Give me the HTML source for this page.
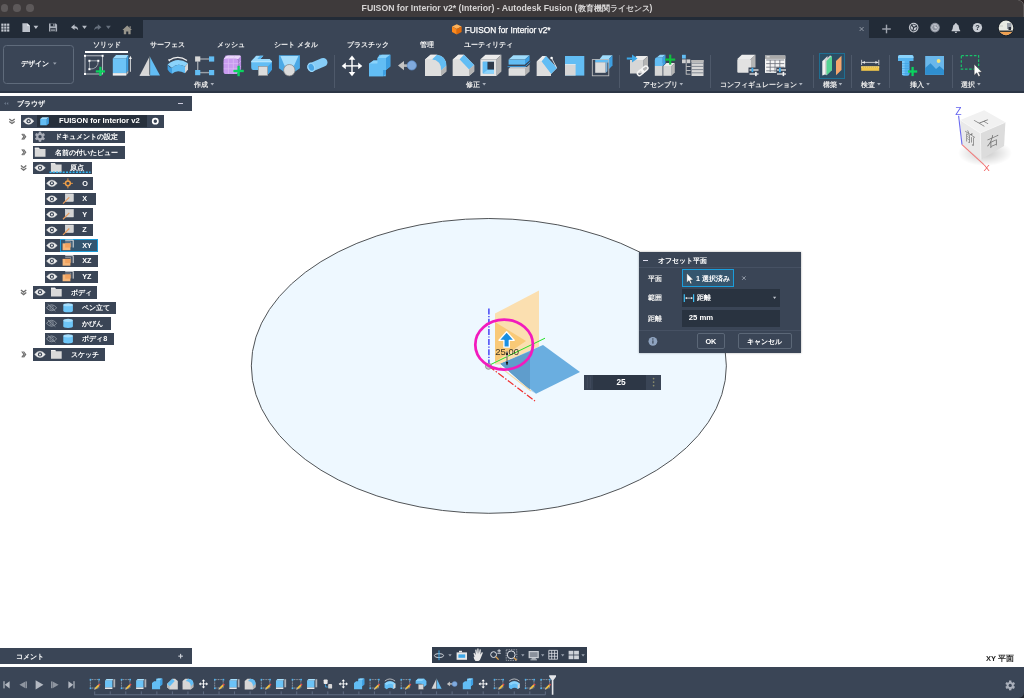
<!DOCTYPE html>
<html lang="ja"><head><meta charset="utf-8"><title>Autodesk Fusion</title>
<style>
html,body{margin:0;padding:0}
body{width:1024px;height:698px;position:relative;overflow:hidden;background:#fff;font-family:"Liberation Sans",sans-serif;color:#fff}
.a{position:absolute}
.t{position:absolute;white-space:nowrap;font-weight:bold;line-height:1;}
.jp{letter-spacing:0}
#title{left:0;top:0;width:1024px;height:17px;background:#3e3a3b}
#tabbar{left:0;top:17px;width:1024px;height:21px;background:#222b37}
#tab{left:143.2px;top:20px;width:725.8px;height:18px;background:#3a4556}
#toolbar{left:0;top:38px;width:1024px;height:54.5px;background:#3a4556;border-bottom:2px solid #2c3645;box-sizing:border-box}
.lbl{font-size:7.1px;color:#f2f2f2;top:41.9px}
.grp{font-size:7.25px;color:#e8e8e8;top:80.9px}
.sep{position:absolute;top:55px;height:33px;width:1px;background:#4e596a}
.row{position:absolute;height:12.5px;background:#3a4556}
.row .t{font-size:7.25px;top:2.5px;color:#fff}
#ui{position:absolute;left:0;top:0;width:1024px;height:698px;will-change:transform}
#icons{left:0;top:0;width:1024px;height:698px;pointer-events:none}
</style></head>
<body>
<div id="ui">
<svg class="a" style="left:0;top:0" width="1024" height="698" viewBox="0 0 1024 698"><ellipse cx="488.85" cy="365.9" rx="237.5" ry="147.4" fill="#eef8ff" stroke="#505356" stroke-width="1"/><polygon points="495.00,313.40 539.00,290.60 539.00,346.60 501.00,364.40 495.00,364.40" fill="#fbdfb0" /><polygon points="495.00,322.00 526.00,341.00 495.00,362.00" fill="#f9c977" /><polygon points="543.00,345.00 580.00,372.00 536.00,393.70 500.50,363.70" fill="#6aaee0" /><polygon points="500.50,363.70 529.80,352.00 529.80,389.50 536.00,393.70 529.80,390.00" fill="#5e9ccb" /><polygon points="500.50,363.70 529.80,352.00 529.80,389.30" fill="#5f9dcc" /><line x1="500.00" y1="367.00" x2="531.00" y2="391.00" stroke="#f5d9a8" stroke-width="1.20" /><line x1="488.90" y1="308.50" x2="488.90" y2="365.00" stroke="#3a3af5" stroke-width="1.40" stroke-dasharray="6 1.5 1.2 1.5"/><line x1="488.70" y1="366.00" x2="535.00" y2="401.00" stroke="#f03030" stroke-width="1.25" stroke-dasharray="7 1.8 1.4 1.8"/><line x1="488.70" y1="365.50" x2="545.00" y2="338.20" stroke="#25e025" stroke-width="1.00" /><circle cx="488.50" cy="366.30" r="3.00" fill="#c8c8c8" stroke="#8a8a8a" stroke-width="0.9"/><line x1="507.00" y1="351.50" x2="507.00" y2="357.00" stroke="#f6ecd6" stroke-width="1.80" /><line x1="507.00" y1="353.00" x2="507.00" y2="365.00" stroke="#222" stroke-width="0.70" /><polygon points="507.00,350.80 505.80,355.00 508.20,355.00" fill="#111" /><polygon points="507.00,365.60 505.80,362.00 508.20,362.00" fill="#111" /><path d="M506.6 331.7 L514.2 340.3 L509.3 340.3 L509.3 347.2 L503.9 347.2 L503.9 340.3 L499 340.3 Z" fill="#1a8fe3" stroke="#fff" stroke-width="1.3" stroke-linejoin="round"/><text x="495.3" y="354.9" font-family="Liberation Sans, sans-serif" font-size="9.45" fill="#3b3424">25.00</text><ellipse cx="504.1" cy="344.65" rx="28.8" ry="25" fill="none" stroke="#f21bbd" stroke-width="2.75"/></svg>
<div class="a" id="title"></div>
<div class="a" style="left:0.5px;top:4.4px;width:7.6px;height:7.6px;border-radius:50%;background:#5d595a"></div>
<div class="a" style="left:13.2px;top:4.4px;width:7.6px;height:7.6px;border-radius:50%;background:#5d595a"></div>
<div class="a" style="left:26.2px;top:4.4px;width:7.6px;height:7.6px;border-radius:50%;background:#5d595a"></div>
<div class="t" style="left:361.6px;top:4.2px;font-size:8.7px;color:#d6d4d4">FUISON for Interior v2* (Interior) - Autodesk Fusion (<span style="font-size:8.15px">教育機関ライセンス</span>)</div>
<div class="a" id="tabbar"></div><div class="a" id="tab"></div>
<div class="t" style="left:464.8px;top:25.9px;font-size:8.3px;color:#fff;font-weight:normal;-webkit-text-stroke:0.25px #fff">FUISON for Interior v2*</div>
<div class="a" id="toolbar"></div>
<div class="a" style="left:2.8px;top:44.6px;width:71.2px;height:39.6px;border:1.2px solid #5f6b7b;border-radius:3.5px;box-sizing:border-box"></div>
<div class="t jp" style="left:21.3px;top:59.6px;font-size:7.3px;color:#fff">デザイン</div>
<div class="t lbl jp" style="left:93.3px;width:26.7px">ソリッド</div>
<div class="t lbl jp" style="left:150.2px;width:32.8px">サーフェス</div>
<div class="t lbl jp" style="left:216.8px;width:26.7px">メッシュ</div>
<div class="t lbl jp" style="left:273.8px;width:42.5px">シート メタル</div>
<div class="t lbl jp" style="left:347.3px;width:40.3px">プラスチック</div>
<div class="t lbl jp" style="left:419.6px;width:13.7px">管理</div>
<div class="t lbl jp" style="left:463.6px;width:47.4px">ユーティリティ</div>
<div class="a" style="left:84.8px;top:51.2px;width:43.7px;height:1.8px;background:#fff"></div>
<div class="t grp jp" style="left:194.4px">作成</div>
<div class="t grp jp" style="left:465.9px">修正</div>
<div class="t grp jp" style="left:643.4px">アセンブリ</div>
<div class="t grp jp" style="left:720.0px">コンフィギュレーション</div>
<div class="t grp jp" style="left:822.5px">構築</div>
<div class="t grp jp" style="left:860.5px">検査</div>
<div class="t grp jp" style="left:910.0px">挿入</div>
<div class="t grp jp" style="left:961.3px">選択</div>
<div class="sep" style="left:334.0px"></div>
<div class="sep" style="left:619.0px"></div>
<div class="sep" style="left:709.5px"></div>
<div class="sep" style="left:812.5px"></div>
<div class="sep" style="left:851.0px"></div>
<div class="sep" style="left:888.8px"></div>
<div class="sep" style="left:951.5px"></div>
<div class="a" style="left:819px;top:53px;width:26px;height:26px;background:#2c4d64;border:1px solid #1f6f92;box-sizing:border-box"></div>
<div class="a" style="left:0;top:95.7px;width:192px;height:15.5px;background:#3a4556"></div>
<div class="t jp" style="left:16.6px;top:99.8px;font-size:7.3px;color:#fff">ブラウザ</div>
<div class="a" style="left:178px;top:102.6px;width:5px;height:1.2px;background:#ccd"></div>
<div class="row" style="left:21.4px;top:115.00px;width:142.2px"><div class="a" style="left:16px;top:0;width:110px;height:12.3px;background:#27303c"></div><div class="t" style="left:37.6px;font-size:7.7px;top:2.3px">FUISON for Interior v2</div></div>
<div class="row" style="left:33.2px;top:130.55px;width:91.6px"><div class="t jp" style="left:21.6px">ドキュメントの設定</div></div>
<div class="row" style="left:33.2px;top:146.10px;width:91.6px"><div class="t jp" style="left:21.6px">名前の付いたビュー</div></div>
<div class="row" style="left:33.2px;top:161.65px;width:58.7px"><div class="t jp" style="left:37.3px">原点</div></div>
<div class="row" style="left:44.8px;top:177.20px;width:48.2px"><div class="t" style="left:37.4px">O</div></div>
<div class="row" style="left:44.8px;top:192.75px;width:50.8px"><div class="t" style="left:37.4px">X</div></div>
<div class="row" style="left:44.8px;top:208.30px;width:48.2px"><div class="t" style="left:37.4px">Y</div></div>
<div class="row" style="left:44.8px;top:223.85px;width:48.2px"><div class="t" style="left:37.4px">Z</div></div>
<div class="row" style="left:44.8px;top:239.40px;width:53.7px"><div class="a" style="left:15.3px;top:0;width:38.4px;height:12.3px;background:#345670;border:1px solid #1b9bd8;box-sizing:border-box"></div><div class="t" style="left:37.4px">XY</div></div>
<div class="row" style="left:44.8px;top:254.95px;width:53.1px"><div class="t" style="left:37.4px">XZ</div></div>
<div class="row" style="left:44.8px;top:270.50px;width:53.1px"><div class="t" style="left:37.4px">YZ</div></div>
<div class="row" style="left:33.2px;top:286.05px;width:63.7px"><div class="t jp" style="left:37.6px">ボディ</div></div>
<div class="row" style="left:44.8px;top:301.60px;width:71.5px"><div class="t jp" style="left:37.4px">ペン立て</div></div>
<div class="row" style="left:44.8px;top:317.15px;width:66.1px"><div class="t jp" style="left:37.4px">かびん</div></div>
<div class="row" style="left:44.8px;top:332.70px;width:69.0px"><div class="t jp" style="left:37.4px">ボディ8</div></div>
<div class="row" style="left:33.2px;top:348.25px;width:71.6px"><div class="t jp" style="left:37.8px">スケッチ</div></div>
<div class="a" style="left:0;top:648.2px;width:192px;height:15.8px;background:#3a4556"></div>
<div class="t jp" style="left:16.3px;top:652.6px;font-size:7.2px;color:#fff">コメント</div>
<div class="a" style="left:0;top:667px;width:1024px;height:31px;background:#3a4556"></div>
<div class="a" style="left:432px;top:647.4px;width:154.6px;height:15.5px;background:#333e4e"></div>
<div class="t" style="left:986px;top:655px;font-size:7.5px;color:#1e1e1e">XY 平面</div>
<div class="a" style="left:639px;top:252.4px;width:161.5px;height:100.2px;background:#3a4556;box-shadow:0 0 2px rgba(0,0,0,.35)"></div>
<div class="a" style="left:639px;top:267.3px;width:161.5px;height:1px;background:#465163"></div>
<div class="a" style="left:639px;top:329.5px;width:161.5px;height:1px;background:#465163"></div>
<div class="a" style="left:643.3px;top:259.6px;width:4.6px;height:1.1px;background:#dde"></div>
<div class="t jp" style="left:657.6px;top:256.8px;font-size:7.3px">オフセット平面</div>
<div class="t" style="left:647.5px;top:274.5px;font-size:7.2px;color:#f0f0f0">平面</div>
<div class="t" style="left:647.5px;top:294.2px;font-size:7.2px;color:#f0f0f0">範囲</div>
<div class="t" style="left:647.5px;top:314.5px;font-size:7.2px;color:#f0f0f0">距離</div>
<div class="a" style="left:681.5px;top:269.3px;width:52.6px;height:18px;background:#35566e;border:1px solid #1a9ddb;box-sizing:border-box"></div>
<div class="t jp" style="left:696px;top:274.6px;font-size:7.2px;color:#fff">1 選択済み</div>
<div class="a" style="left:681.5px;top:289.4px;width:98.5px;height:17.5px;background:#293340"></div>
<div class="t" style="left:696.8px;top:294.4px;font-size:7.2px;color:#fff">距離</div>
<div class="a" style="left:681.5px;top:309.8px;width:98.5px;height:17.2px;background:#293340"></div>
<div class="t" style="left:688.8px;top:314.3px;font-size:7.7px;color:#fff">25 mm</div>
<div class="a" style="left:696.8px;top:333.4px;width:28.2px;height:15.6px;border:1px solid #5b6777;border-radius:2px;box-sizing:border-box"></div>
<div class="t" style="left:696.8px;width:28.2px;text-align:center;top:337.6px;font-size:7.3px">OK</div>
<div class="a" style="left:738px;top:333.4px;width:53.7px;height:15.6px;border:1px solid #5b6777;border-radius:2px;box-sizing:border-box"></div>
<div class="t jp" style="left:738px;width:53.7px;text-align:center;top:337.7px;font-size:7.2px">キャンセル</div>
<div class="a" style="left:584px;top:375px;width:77px;height:15px;background:#2d3746"></div>
<div class="a" style="left:584px;top:375px;width:9px;height:15px;background:#364152"></div>
<div class="a" style="left:646px;top:375px;width:15px;height:15px;background:#3a4556"></div>
<div class="t" style="left:592.6px;width:57px;text-align:center;top:378.4px;font-size:8.3px">25</div>
<svg class="a" id="icons" width="1024" height="698" viewBox="0 0 1024 698"><g stroke="#c4c8ce" stroke-width="0.9" fill="none"><rect x="85" y="55.8" width="17.6" height="18.2"/><path d="M89.4 60.8 H98.3 Q98.3 69.2 89.4 69.2 Z" stroke-width="0.7"/></g><rect x="84.00" y="54.80" width="2.00" height="2.00" fill="#fff" /><rect x="101.60" y="54.80" width="2.00" height="2.00" fill="#fff" /><rect x="84.00" y="73.00" width="2.00" height="2.00" fill="#fff" /><rect x="88.40" y="59.80" width="2.00" height="2.00" fill="#fff" /><rect x="97.30" y="59.80" width="2.00" height="2.00" fill="#fff" /><rect x="88.40" y="68.20" width="2.00" height="2.00" fill="#fff" /><rect x="95.80" y="70.30" width="9.20" height="2.20" fill="#0ad45f" /><rect x="99.30" y="66.80" width="2.20" height="9.20" fill="#0ad45f" /><polygon points="112.80,58.40 116.10,55.00 128.30,55.00 126.20,58.40" fill="#9fdcfc" /><polygon points="126.20,58.40 128.30,55.00 128.30,70.60 126.20,73.10" fill="#3d9fe2" /><rect x="112.80" y="58.40" width="13.40" height="14.70" fill="#6cc3f6" /><rect x="112.80" y="73.10" width="13.40" height="2.50" fill="#f0f0f0" /><polygon points="126.20,73.10 128.30,70.60 128.30,72.90 126.20,75.60" fill="#b4b4b4" /><line x1="130.40" y1="58.00" x2="130.40" y2="71.80" stroke="#e8e8e8" stroke-width="0.90" /><polygon points="130.40,55.80 128.90,59.00 131.90,59.00" fill="#f0f0f0" /><polygon points="149.70,56.20 139.70,75.60 149.70,75.60" fill="#d6d6d6" /><polygon points="149.70,56.20 160.00,75.60 149.70,75.60" fill="#62bdf4" /><line x1="149.70" y1="56.20" x2="149.70" y2="75.60" stroke="#555" stroke-width="0.80" /><line x1="139.70" y1="75.30" x2="149.70" y2="75.30" stroke="#f4f4f4" stroke-width="0.80" /><path d="M168.8 60.4 Q178 54.3 187 60.6" fill="none" stroke="#f0f0f0" stroke-width="1.2"/><polygon points="168.00,59.30 170.40,59.60 169.30,61.80" fill="#eee" /><path d="M167.6 64.5 Q177 56 188 63.3 L185 66.5 Q177 62.5 172 68 Z" fill="#8ad3fb" /><path d="M167.6 64.5 L167.6 69.5 Q169 72.5 172 73.8 L172 68 Q168.5 67 167.6 64.5 Z" fill="#3d9fe2" /><path d="M172 68 Q177 62.5 185 66.5 L185 73.2 Q177 68.8 172 73.8 Z" fill="#62bdf4" /><polygon points="185.00,66.50 188.00,63.30 188.00,69.50 185.00,73.20" fill="#d6d6d6" /><line x1="200.00" y1="59.00" x2="209.00" y2="59.00" stroke="#9aa0a8" stroke-width="1.40" /><line x1="197.70" y1="61.50" x2="197.70" y2="70.00" stroke="#9aa0a8" stroke-width="1.40" /><line x1="200.00" y1="72.60" x2="209.00" y2="72.60" stroke="#9aa0a8" stroke-width="1.40" /><rect x="195.10" y="56.40" width="5.20" height="5.20" fill="#d8d8d8" /><rect x="209.00" y="56.40" width="5.20" height="5.20" fill="#62bdf4" /><rect x="195.10" y="70.00" width="5.20" height="5.20" fill="#62bdf4" /><rect x="209.00" y="70.00" width="5.20" height="5.20" fill="#62bdf4" /><path d="M225.6 55.5 H239.5 Q241.1 55.5 241.1 57 V69.3 L238.2 73 V59.5 L223.5 59.5 Z" fill="#b78be0" /><path d="M223.5 60 Q223.5 58.4 225 57.4 L226.5 55.9 Q227 55.5 228 55.5 H239.5 Q241.1 55.5 240.6 56.4 L238.2 58.9 H224 Z" fill="#ead8fb" /><rect x="223.5" y="58.4" width="14.7" height="15.6" rx="2.6" fill="#c99cf0"/><path d="M223.8 63.6 H238 M223.8 68.8 H238 M228.4 58.6 V73.8 M233.3 58.6 V73.8" fill="none" stroke="#dcbcf6" stroke-width="0.7"/><path d="M229.8 55.7 L228.4 58.4 M235 55.7 L233.3 58.4 M238.4 63.6 L241 61 M238.4 68.8 L241 66" fill="none" stroke="#d9bdf3" stroke-width="0.5"/><rect x="233.40" y="69.83" width="10.40" height="2.35" fill="#0ad45f" /><rect x="237.42" y="65.80" width="2.35" height="10.40" fill="#0ad45f" /><path d="M251.2 61 L271.8 61 L271.8 69.7 L267.6 74.8 L258.3 74.8 L258.3 70 L253 70 Q251.2 69.5 251.2 67.5 Z" fill="#62bdf4" /><path d="M251.2 61 L256.2 55.7 L263.4 55.7 L260.4 59.1 L269.7 59.1 L271.8 61 Z" fill="#9bdafc" /><polygon points="260.00,55.70 263.40,55.70 260.40,59.10 257.30,59.10" fill="#58b6f0" /><rect x="251.20" y="61.00" width="20.60" height="1.30" fill="#b4e4fd" /><path d="M267.6 66.8 L271.8 62.6 L271.8 69.7 L267.6 74.8 Z" fill="#3d9fe2" /><rect x="258.30" y="66.40" width="9.40" height="9.20" fill="#dcdcdc" stroke="#8a8a8a" stroke-width="0.6"/><polygon points="278.90,55.20 299.90,55.20 299.90,68.30 293.00,73.00 285.60,73.00 278.90,68.30" fill="#4ba9e6" /><polygon points="280.40,55.90 298.40,55.90 294.00,65.80 284.60,65.80" fill="#a6defc" /><circle cx="289.30" cy="70.20" r="5.70" fill="#dcdcdc" stroke="#808080" stroke-width="0.7"/><line x1="311.50" y1="67.20" x2="323.20" y2="62.30" stroke="#86cdf8" stroke-width="8.60" stroke-linecap="round"/><ellipse cx="311.3" cy="67.3" rx="3.2" ry="4.2" transform="rotate(-22 311.3 67.3)" fill="#4aa6e6" stroke="#9bd8fb" stroke-width="1.2"/><line x1="344.00" y1="65.90" x2="360.00" y2="65.90" stroke="#fff" stroke-width="1.40" /><line x1="352.00" y1="57.90" x2="352.00" y2="73.90" stroke="#fff" stroke-width="1.40" /><polygon points="362.30,65.90 358.20,62.60 358.20,69.20" fill="#fff" /><polygon points="341.70,65.90 345.80,69.20 345.80,62.60" fill="#fff" /><polygon points="352.00,76.20 348.70,72.10 355.30,72.10" fill="#fff" /><polygon points="352.00,55.60 355.30,59.70 348.70,59.70" fill="#fff" /><path d="M379.5 54.8 H390.3 V66.5 L385.8 70 V76.2 H369 V63.8 L373.5 60.5 H377.5 V58 Z" fill="#62bdf4" /><path d="M377.5 58 L381.8 54.8 H390.3 L386 58 Z" fill="#8ad3fb" /><path d="M369 63.8 L373.5 60.5 H379.8 L377.5 63.8 Z" fill="#8ad3fb" /><path d="M386 58 L390.3 54.8 V66.5 L386 70 Z" fill="#3d9fe2" /><path d="M377.5 58 H386 V70 H383 V76.2 H369 V63.8 H377.5 Z" fill="#62bdf4" /><path d="M383 70 H386 L386 73.8 L383 76.2 Z" fill="#3d9fe2" /><line x1="403.00" y1="65.60" x2="409.00" y2="65.60" stroke="#b9b9b9" stroke-width="2.60" /><polygon points="398.00,65.60 404.00,61.00 404.00,70.20" fill="#c4c4c4" /><circle cx="411.80" cy="65.40" r="4.60" fill="#80aade" stroke="#5f8fcb" stroke-width="0.7"/><path d="M425 59.5 L430.5 54.8 H437 Q446.3 56 446.3 66 V71.5 L441 76 H425 Z" fill="#d6d6d6" /><path d="M425 59.5 L430.5 54.8 H437 L432 59.5 Z" fill="#ececec" /><path d="M432 59.5 L437 54.8 Q446.3 56 446.3 66 L441 70.5 Q441 60.5 432 59.5 Z" fill="#62bdf4" /><path d="M441 70.5 L446.3 66 V71.5 L441 76 Z" fill="#b4b4b4" /><path d="M425 59.5 H432 Q441 60.5 441 70.5 V76 H425 Z" fill="#dedede" /><path d="M452.8 59.5 L458.3 54.8 H464 L474.2 65 V71.5 L469 76 H452.8 Z" fill="#d6d6d6" /><path d="M452.8 59.5 L458.3 54.8 H464 L459.5 59.5 Z" fill="#ececec" /><path d="M459.5 59.5 L464 54.8 L474.2 65 L469 69.5 Z" fill="#62bdf4" /><path d="M469 69.5 L474.2 65 V71.5 L469 76 Z" fill="#b4b4b4" /><path d="M452.8 59.5 H459.5 L469 69.5 V76 H452.8 Z" fill="#dedede" /><polygon points="480.40,59.30 485.50,54.80 501.40,54.80 496.50,59.30" fill="#ececec" /><polygon points="496.50,59.30 501.40,54.80 501.40,71.50 496.50,76.00" fill="#b4b4b4" /><rect x="480.40" y="59.30" width="16.10" height="16.70" fill="#e4e4e4" /><rect x="482.80" y="61.80" width="11.20" height="11.60" fill="#3d9fe2" /><polygon points="482.80,61.80 487.50,61.80 487.50,69.50 482.80,73.40" fill="#62bdf4" /><polygon points="482.80,73.40 487.50,69.50 494.00,69.50 494.00,73.40" fill="#8ad3fb" /><rect x="487.50" y="61.80" width="6.50" height="7.70" fill="#2f3a4a" /><polygon points="508.60,59.60 513.30,55.20 529.60,55.20 525.00,59.60" fill="#9fdcfc" /><polygon points="525.00,59.60 529.60,55.20 529.60,60.40 525.00,64.60" fill="#3d9fe2" /><rect x="508.60" y="59.60" width="16.40" height="5.00" fill="#62bdf4" /><polygon points="508.60,68.70 510.20,67.20 529.60,67.20 525.00,68.70" fill="#f2f2f2" /><polygon points="525.00,68.70 529.60,64.60 529.60,71.60 525.00,75.80" fill="#b4b4b4" /><rect x="508.60" y="68.70" width="16.40" height="7.10" fill="#dedede" /><path d="M507.6 66.6 H525.2 L530.2 62" fill="none" stroke="#3aa0e8" stroke-width="0.9"/><path d="M536.8 61.5 L542.5 56 H546 L557 68 L551 74 V76 H536.8 Z" fill="#d6d6d6" /><path d="M536.8 61.5 L542.5 56 H546 L541.5 61.5 Z" fill="#ececec" /><path d="M541.5 61.5 L546 56 L557 68 L551 74 Z" fill="#62bdf4" /><path d="M536.8 61.5 H541.5 L551 74 V76 H536.8 Z" fill="#dedede" /><line x1="551.80" y1="58.50" x2="556.50" y2="67.50" stroke="#e8e8e8" stroke-width="0.90" /><circle cx="551.60" cy="58.00" r="1.30" fill="#fff" /><rect x="565.00" y="56.00" width="19.30" height="19.60" fill="#62bdf4" /><rect x="565.00" y="64.50" width="10.60" height="11.10" fill="#d6d6d6" /><line x1="565.00" y1="64.50" x2="575.60" y2="64.50" stroke="#f2f2f2" stroke-width="0.70" /><polygon points="599.50,59.20 602.60,55.20 612.50,55.20 608.80,59.20" fill="#9fdcfc" /><polygon points="608.80,59.20 612.50,55.20 612.50,65.40 608.80,69.20" fill="#3d9fe2" /><rect x="595.20" y="59.60" width="13.60" height="3.00" fill="#62bdf4" /><rect x="592.30" y="59.60" width="16.50" height="16.20" fill="none" stroke="#c8c8c8" stroke-width="0.8"/><rect x="595.20" y="62.30" width="10.50" height="10.50" fill="#dcdcdc" /><polygon points="605.70,62.30 607.40,60.80 607.40,71.20 605.70,72.80" fill="#7fb4dc" /><polygon points="632.00,60.00 636.50,56.00 648.00,56.00 643.50,60.00" fill="#ececec" /><polygon points="643.50,60.00 648.00,56.00 648.00,69.50 643.50,73.50" fill="#b4b4b4" /><rect x="630.00" y="60.00" width="13.50" height="13.50" fill="#d6d6d6" /><line x1="626.80" y1="58.50" x2="633.00" y2="58.50" stroke="#3da8e8" stroke-width="2.00" /><polygon points="637.50,58.50 632.00,54.60 632.00,62.40" fill="#3da8e8" /><g fill="none" stroke="#f4f4f4" stroke-width="1.5"><rect x="-3.4" y="-2.1" width="6.8" height="4.2" rx="2.1" transform="translate(640.5 72.6) rotate(-40)"/><rect x="-3.4" y="-2.1" width="6.8" height="4.2" rx="2.1" transform="translate(644.8 69) rotate(-40)"/></g><polygon points="654.80,66.00 658.00,63.00 662.50,63.00 662.50,66.00" fill="#ececec" /><rect x="654.80" y="66.00" width="7.70" height="9.80" fill="#d6d6d6" /><polygon points="663.30,66.00 666.50,63.00 674.80,63.00 671.60,66.00" fill="#ececec" /><polygon points="671.60,66.00 674.80,63.00 674.80,72.60 671.60,75.80" fill="#b4b4b4" /><rect x="663.30" y="66.00" width="8.30" height="9.80" fill="#d6d6d6" /><path d="M654.8 60 Q654.8 57.5 657 57.2 L662.8 57.2 V66 H654.8 Z" fill="#62bdf4" /><path d="M657 57.2 L660 54.8 H665.5 L662.8 57.2 Z" fill="#8ad3fb" /><polygon points="662.80,57.20 665.50,54.80 665.50,63.50 662.80,66.00" fill="#3d9fe2" /><rect x="665.20" y="58.50" width="10.00" height="2.20" fill="#10c040" /><rect x="669.10" y="54.60" width="2.20" height="10.00" fill="#10c040" /><rect x="682.00" y="54.80" width="3.80" height="3.80" fill="#62bdf4" /><rect x="682.00" y="59.40" width="3.80" height="3.80" fill="#d0d0d0" /><rect x="686.50" y="59.40" width="3.80" height="3.80" fill="#d0d0d0" /><line x1="686.20" y1="63.20" x2="686.20" y2="74.50" stroke="#c8c8c8" stroke-width="0.90" /><line x1="686.20" y1="66.50" x2="690.50" y2="66.50" stroke="#c8c8c8" stroke-width="0.90" /><line x1="686.20" y1="70.50" x2="690.50" y2="70.50" stroke="#c8c8c8" stroke-width="0.90" /><line x1="686.20" y1="74.20" x2="690.50" y2="74.20" stroke="#c8c8c8" stroke-width="0.90" /><rect x="691.50" y="60.00" width="12.00" height="16.00" fill="#d8d8d8" /><line x1="691.50" y1="63.20" x2="703.50" y2="63.20" stroke="#6b7380" stroke-width="0.80" /><line x1="691.50" y1="66.40" x2="703.50" y2="66.40" stroke="#6b7380" stroke-width="0.80" /><line x1="691.50" y1="69.60" x2="703.50" y2="69.60" stroke="#6b7380" stroke-width="0.80" /><line x1="691.50" y1="72.80" x2="703.50" y2="72.80" stroke="#6b7380" stroke-width="0.80" /><rect x="691.50" y="60.00" width="12.00" height="2.20" fill="#b8b8b8" /><polygon points="737.30,59.00 741.80,54.80 755.50,54.80 751.00,59.00" fill="#ececec" /><polygon points="751.00,59.00 755.50,54.80 755.50,68.50 751.00,72.80" fill="#b4b4b4" /><rect x="737.3" y="59" width="13.7" height="13.8" rx="1" fill="#e2e2e2"/><rect x="748.50" y="67.50" width="10.00" height="9.00" fill="#3a4556" /><line x1="749.50" y1="70.00" x2="758.50" y2="70.00" stroke="#e8e8e8" stroke-width="1.30" /><rect x="751.50" y="67.80" width="1.80" height="4.40" fill="#3da8e8" /><line x1="749.50" y1="74.00" x2="758.50" y2="74.00" stroke="#e8e8e8" stroke-width="1.30" /><rect x="755.10" y="71.90" width="1.60" height="4.20" fill="#f4f4f4" /><rect x="765.00" y="55.50" width="20.30" height="17.40" fill="#f4f4f4" /><rect x="765.00" y="55.50" width="20.30" height="3.40" fill="#a9a9a9" /><rect x="766.60" y="56.40" width="3.00" height="0.90" fill="#f0f0f0" /><line x1="770.20" y1="60.00" x2="770.20" y2="72.00" stroke="#6a6f78" stroke-width="0.80" /><line x1="775.00" y1="60.00" x2="775.00" y2="72.00" stroke="#6a6f78" stroke-width="0.80" /><line x1="779.80" y1="60.00" x2="779.80" y2="72.00" stroke="#6a6f78" stroke-width="0.80" /><line x1="766.20" y1="60.00" x2="784.20" y2="60.00" stroke="#6a6f78" stroke-width="0.80" /><line x1="766.20" y1="63.60" x2="784.20" y2="63.60" stroke="#6a6f78" stroke-width="0.80" /><line x1="766.20" y1="67.20" x2="784.20" y2="67.20" stroke="#6a6f78" stroke-width="0.80" /><line x1="766.20" y1="70.80" x2="784.20" y2="70.80" stroke="#6a6f78" stroke-width="0.80" /><rect x="776.30" y="67.50" width="10.30" height="9.00" fill="#3a4556" /><line x1="777.00" y1="70.00" x2="786.00" y2="70.00" stroke="#e8e8e8" stroke-width="1.30" /><rect x="779.00" y="67.80" width="1.80" height="4.40" fill="#3da8e8" /><line x1="777.00" y1="74.00" x2="786.00" y2="74.00" stroke="#e8e8e8" stroke-width="1.30" /><rect x="782.60" y="71.90" width="1.60" height="4.20" fill="#f4f4f4" /><polygon points="822.50,61.00 827.50,56.00 827.50,70.50 822.50,75.50" fill="#d9d9d9" /><polygon points="822.50,61.00 825.00,60.00 825.00,74.50 822.50,75.50" fill="#f0f0f0" /><polygon points="825.00,60.20 830.00,55.50 831.50,56.00 831.50,70.30 826.50,75.20 825.00,74.60" fill="#cfcfcf" /><polygon points="826.50,61.00 832.00,55.80 832.00,70.00 826.50,75.20" fill="#55d494" /><polygon points="836.00,61.00 841.50,55.80 841.50,70.00 836.00,75.20" fill="#f4a56c" /><rect x="861.20" y="66.40" width="18.00" height="4.40" fill="#f0c64a" /><rect x="861.20" y="66.40" width="18.00" height="1.20" fill="#ffe38a" /><line x1="863.20" y1="66.40" x2="863.20" y2="68.00" stroke="#b08a20" stroke-width="0.50" /><line x1="865.20" y1="66.40" x2="865.20" y2="68.00" stroke="#b08a20" stroke-width="0.50" /><line x1="867.20" y1="66.40" x2="867.20" y2="68.00" stroke="#b08a20" stroke-width="0.50" /><line x1="869.20" y1="66.40" x2="869.20" y2="68.00" stroke="#b08a20" stroke-width="0.50" /><line x1="871.20" y1="66.40" x2="871.20" y2="68.00" stroke="#b08a20" stroke-width="0.50" /><line x1="873.20" y1="66.40" x2="873.20" y2="68.00" stroke="#b08a20" stroke-width="0.50" /><line x1="875.20" y1="66.40" x2="875.20" y2="68.00" stroke="#b08a20" stroke-width="0.50" /><line x1="877.20" y1="66.40" x2="877.20" y2="68.00" stroke="#b08a20" stroke-width="0.50" /><line x1="862.00" y1="62.40" x2="878.40" y2="62.40" stroke="#e8e8e8" stroke-width="0.80" /><line x1="861.60" y1="59.80" x2="861.60" y2="65.00" stroke="#e8e8e8" stroke-width="0.80" /><line x1="878.80" y1="59.80" x2="878.80" y2="65.00" stroke="#e8e8e8" stroke-width="0.80" /><polygon points="862.00,62.40 865.00,61.00 865.00,63.80" fill="#e8e8e8" /><polygon points="878.40,62.40 875.40,61.00 875.40,63.80" fill="#e8e8e8" /><path d="M898 57 Q898 55 900 55 H911.5 Q913.5 55 913.5 57 V61 H909.5 V74 Q909.5 75.8 907.5 75.8 H903.8 Q902 75.8 902 74 V61 H898 Z" fill="#56b4ef" /><path d="M898 57 Q898 55 900 55 H911.5 Q913.5 55 913.5 57 V58 H898 Z" fill="#8ad3fb" /><rect x="902.00" y="61.00" width="2.60" height="14.00" fill="#7ccaf8" /><line x1="902.00" y1="63.50" x2="909.50" y2="63.50" stroke="#3d9fe2" stroke-width="0.60" /><line x1="902.00" y1="66.00" x2="909.50" y2="66.00" stroke="#3d9fe2" stroke-width="0.60" /><line x1="902.00" y1="68.50" x2="909.50" y2="68.50" stroke="#3d9fe2" stroke-width="0.60" /><line x1="902.00" y1="71.00" x2="909.50" y2="71.00" stroke="#3d9fe2" stroke-width="0.60" /><line x1="902.00" y1="73.50" x2="909.50" y2="73.50" stroke="#3d9fe2" stroke-width="0.60" /><rect x="908.00" y="70.35" width="9.20" height="2.30" fill="#0ad45f" /><rect x="911.45" y="66.90" width="2.30" height="9.20" fill="#0ad45f" /><rect x="925.20" y="56.00" width="18.80" height="18.80" fill="#6ab7ea" /><polygon points="925.20,74.80 925.20,68.00 930.50,63.20 936.00,69.00 939.50,66.00 944.00,70.00 944.00,74.80" fill="#2f8fd0" /><circle cx="938.60" cy="61.00" r="1.90" fill="#f7e57c" /><rect x="961.3" y="55.6" width="17.3" height="13.6" fill="none" stroke="#19c46a" stroke-width="1.2" stroke-dasharray="2.6 1.6"/><path d="M974.2 64.2 L974.2 75.2 L976.8 72.8 L978.6 76.6 L980.2 75.8 L978.5 72.2 L981.8 72 Z" fill="#fff" stroke="#333" stroke-width="0.4"/><polygon points="210.50,83.00 214.10,83.00 212.30,85.40" fill="#aab1bc" /><polygon points="482.40,83.00 486.00,83.00 484.20,85.40" fill="#aab1bc" /><polygon points="679.50,83.00 683.10,83.00 681.30,85.40" fill="#aab1bc" /><polygon points="799.00,83.00 802.60,83.00 800.80,85.40" fill="#aab1bc" /><polygon points="838.60,83.00 842.20,83.00 840.40,85.40" fill="#aab1bc" /><polygon points="877.10,83.00 880.70,83.00 878.90,85.40" fill="#aab1bc" /><polygon points="926.20,83.00 929.80,83.00 928.00,85.40" fill="#aab1bc" /><polygon points="977.10,83.00 980.70,83.00 978.90,85.40" fill="#aab1bc" /><polygon points="53.00,62.40 56.60,62.40 54.80,64.80" fill="#98a1ad" /><rect x="1.30" y="23.60" width="2.20" height="2.20" fill="#c3c8d0" /><rect x="1.30" y="26.50" width="2.20" height="2.20" fill="#c3c8d0" /><rect x="1.30" y="29.40" width="2.20" height="2.20" fill="#c3c8d0" /><rect x="4.20" y="23.60" width="2.20" height="2.20" fill="#c3c8d0" /><rect x="4.20" y="26.50" width="2.20" height="2.20" fill="#c3c8d0" /><rect x="4.20" y="29.40" width="2.20" height="2.20" fill="#c3c8d0" /><rect x="7.10" y="23.60" width="2.20" height="2.20" fill="#c3c8d0" /><rect x="7.10" y="26.50" width="2.20" height="2.20" fill="#c3c8d0" /><rect x="7.10" y="29.40" width="2.20" height="2.20" fill="#c3c8d0" /><path d="M22.4 23.2 H27.2 L30 26 V31.9 H22.4 Z" fill="#bcc1ca" /><path d="M27.2 23.2 V26 H30 Z" fill="#e6e9ee" /><polygon points="33.50,25.70 38.30,25.70 35.90,28.90" fill="#bcc1ca" /><path d="M49 23.5 H55.8 L57.1 24.8 V31.6 H49 Z" fill="#a9afb9" /><rect x="50.60" y="23.50" width="4.40" height="2.80" fill="#222b37" /><rect x="53.30" y="23.90" width="1.20" height="2.00" fill="#a9afb9" /><rect x="50.40" y="28.00" width="5.20" height="3.60" fill="#222b37" /><rect x="51.00" y="28.80" width="4.00" height="0.70" fill="#a9afb9" /><rect x="51.00" y="30.20" width="4.00" height="0.70" fill="#a9afb9" /><path d="M71 27.2 L74.6 24.3 V26.2 Q78 26.2 78.2 30.3 Q76.8 28.2 74.6 28.3 V30.1 Z" fill="#b6bbc4" /><polygon points="82.10,25.70 86.90,25.70 84.50,28.90" fill="#b6bbc4" /><path d="M101.4 27.2 L97.8 24.3 V26.2 Q94.4 26.2 94.2 30.3 Q95.6 28.2 97.8 28.3 V30.1 Z" fill="#66707d" /><polygon points="106.00,25.70 110.80,25.70 108.40,28.90" fill="#66707d" /><path d="M127.2 25.6 L132 30 H130.6 V34.2 H128.3 V31.4 H126.2 V34.2 H123.8 V30 H122.4 Z" fill="#98958b" /><rect x="129.60" y="26.20" width="1.10" height="2.40" fill="#98958b" /><polygon points="456.80,24.30 461.60,26.60 456.80,29.00 452.00,26.60" fill="#ffb35a" /><polygon points="452.00,26.60 456.80,29.00 456.80,34.40 452.00,31.90" fill="#ff8a1c" /><polygon points="461.60,26.60 456.80,29.00 456.80,34.40 461.60,31.90" fill="#e06a0a" /><line x1="859.60" y1="27.00" x2="863.60" y2="31.00" stroke="#9aa1ab" stroke-width="0.90" /><line x1="863.60" y1="27.00" x2="859.60" y2="31.00" stroke="#9aa1ab" stroke-width="0.90" /><rect x="882.20" y="28.30" width="8.60" height="1.40" fill="#a0a6af" /><rect x="885.80" y="24.70" width="1.40" height="8.60" fill="#a0a6af" /><circle cx="913.70" cy="27.60" r="4.80" fill="#c8ccd3" /><path d="M913.7 27.6 L911.2 24.6 M913.7 27.6 L917 26 M913.7 27.6 L912.6 31.4" fill="none" stroke="#222b37" stroke-width="1.1"/><circle cx="913.70" cy="27.60" r="3.30" fill="none" stroke="#222b37" stroke-width="0.8"/><circle cx="935.00" cy="27.60" r="4.80" fill="#8e949f" /><circle cx="935.00" cy="27.60" r="3.30" fill="none" stroke="#c9cdd4" stroke-width="0.8"/><path d="M935 25.4 V27.8 H937" fill="none" stroke="#e0e3e8" stroke-width="0.9"/><path d="M955.9 23 Q956.8 23 956.8 23.9 Q959 24.8 959 27.6 Q959 29.8 960.2 30.6 V31.2 H951.6 V30.6 Q952.8 29.8 952.8 27.6 Q952.8 24.8 955 23.9 Q955 23 955.9 23 Z" fill="#c8ccd3" /><path d="M954.7 31.8 H957.1 Q957 33 955.9 33 Q954.8 33 954.7 31.8 Z" fill="#c8ccd3" /><circle cx="977.40" cy="27.60" r="4.70" fill="#c8ccd3" /><text x="977.4" y="30.3" text-anchor="middle" font-family="Liberation Sans, sans-serif" font-weight="bold" font-size="7.4" fill="#222b37">?</text><clipPath id="av"><circle cx="1006" cy="27.9" r="7.3"/></clipPath><circle cx="1006.00" cy="27.90" r="7.80" fill="#10141a" /><g clip-path="url(#av)"><rect x="998.00" y="20.00" width="16.00" height="16.00" fill="#e9ebe4" /><rect x="998.00" y="30.50" width="16.00" height="2.00" fill="#3b3a36" /><rect x="998.00" y="32.00" width="16.00" height="4.00" fill="#f0a050" /><rect x="1007.00" y="23.00" width="4.50" height="6.00" fill="#9aa0a8" /><rect x="1008.50" y="27.00" width="2.50" height="3.00" fill="#2a2f38" /><rect x="999.00" y="25.50" width="4.00" height="1.00" fill="#c9ccc6" /></g><path d="M4.2 103.4 l1.6 -1.5 v3 Z M6.6 103.4 l1.6 -1.5 v3 Z" fill="#6f7c8f" /><path d="M9.30 118.95 l2.7 2.1 l2.7 -2.1 M9.30 121.45 l2.7 2.1 l2.7 -2.1" fill="none" stroke="#6e6e6e" stroke-width="1.3"/><path d="M23.30 121.15 Q28.60 114.85 33.90 121.15 Q28.60 127.45 23.30 121.15 Z" fill="#ececec" stroke="#ececec" stroke-width="0.5" stroke-linejoin="round"/><circle cx="28.60" cy="121.15" r="2.15" fill="#3a4556" /><circle cx="28.60" cy="121.15" r="1.00" fill="#ececec" /><polygon points="40.20,119.00 42.30,117.20 48.90,117.20 46.80,119.00" fill="#a6defc" /><polygon points="46.80,119.00 48.90,117.20 48.90,123.40 46.80,125.30" fill="#3d9fe2" /><rect x="40.20" y="119.00" width="6.60" height="6.30" fill="#62bdf4" /><circle cx="155.30" cy="121.15" r="2.60" fill="none" stroke="#fff" stroke-width="1.7"/><path d="M21.80 133.80 l2.2 2.9 l-2.2 2.9 M23.50 133.80 l2.2 2.9 l-2.2 2.9" fill="none" stroke="#6e6e6e" stroke-width="1.15"/><rect x="-1.2" y="-5.10" width="2.4" height="3" fill="#a9adb8" transform="translate(40.00 136.70) rotate(0)"/><rect x="-1.2" y="-5.10" width="2.4" height="3" fill="#a9adb8" transform="translate(40.00 136.70) rotate(60)"/><rect x="-1.2" y="-5.10" width="2.4" height="3" fill="#a9adb8" transform="translate(40.00 136.70) rotate(120)"/><rect x="-1.2" y="-5.10" width="2.4" height="3" fill="#a9adb8" transform="translate(40.00 136.70) rotate(180)"/><rect x="-1.2" y="-5.10" width="2.4" height="3" fill="#a9adb8" transform="translate(40.00 136.70) rotate(240)"/><rect x="-1.2" y="-5.10" width="2.4" height="3" fill="#a9adb8" transform="translate(40.00 136.70) rotate(300)"/><circle cx="40.00" cy="136.70" r="3.70" fill="#a9adb8" /><circle cx="40.00" cy="136.70" r="1.67" fill="#3a4556" /><path d="M21.80 149.35 l2.2 2.9 l-2.2 2.9 M23.50 149.35 l2.2 2.9 l-2.2 2.9" fill="none" stroke="#6e6e6e" stroke-width="1.15"/><path d="M34.80 147.75 h4 l1 1.3 h5.7 v7.6 h-10.7 Z" fill="#d9d9d9" /><path d="M34.80 147.75 h4 l0.8 1 h-4.8 Z" fill="#f2f2f2" /><path d="M20.90 165.60 l2.7 2.1 l2.7 -2.1 M20.90 168.10 l2.7 2.1 l2.7 -2.1" fill="none" stroke="#6e6e6e" stroke-width="1.3"/><path d="M34.70 167.80 Q40.00 161.50 45.30 167.80 Q40.00 174.10 34.70 167.80 Z" fill="#ececec" stroke="#ececec" stroke-width="0.5" stroke-linejoin="round"/><circle cx="40.00" cy="167.80" r="2.15" fill="#3a4556" /><circle cx="40.00" cy="167.80" r="1.00" fill="#ececec" /><path d="M50.90 163.30 h4 l1 1.3 h5.7 v7.6 h-10.7 Z" fill="#d9d9d9" /><path d="M50.90 163.30 h4 l0.8 1 h-4.8 Z" fill="#f2f2f2" /><line x1="49.50" y1="172.20" x2="90.50" y2="172.20" stroke="#2bb4f5" stroke-width="1.50" stroke-dasharray="2 1.3"/><path d="M46.60 183.35 Q51.90 177.05 57.20 183.35 Q51.90 189.65 46.60 183.35 Z" fill="#ececec" stroke="#ececec" stroke-width="0.5" stroke-linejoin="round"/><circle cx="51.90" cy="183.35" r="2.15" fill="#3a4556" /><circle cx="51.90" cy="183.35" r="1.00" fill="#ececec" /><line x1="62.90" y1="183.35" x2="72.90" y2="183.35" stroke="#f0a04a" stroke-width="0.90" /><line x1="67.90" y1="178.35" x2="67.90" y2="188.35" stroke="#f0a04a" stroke-width="0.90" /><circle cx="67.90" cy="183.35" r="2.40" fill="#3a4556" stroke="#f0a04a" stroke-width="1.5"/><path d="M46.60 198.90 Q51.90 192.60 57.20 198.90 Q51.90 205.20 46.60 198.90 Z" fill="#ececec" stroke="#ececec" stroke-width="0.5" stroke-linejoin="round"/><circle cx="51.90" cy="198.90" r="2.15" fill="#3a4556" /><circle cx="51.90" cy="198.90" r="1.00" fill="#ececec" /><rect x="65.30" y="193.90" width="8.00" height="7.50" fill="#d4d4d4" /><rect x="65.30" y="193.90" width="8.00" height="7.50" fill="none" stroke="#f0f0f0" stroke-width="0.5"/><line x1="63.00" y1="203.70" x2="69.30" y2="197.40" stroke="#e89a5a" stroke-width="1.20" /><path d="M46.60 214.45 Q51.90 208.15 57.20 214.45 Q51.90 220.75 46.60 214.45 Z" fill="#ececec" stroke="#ececec" stroke-width="0.5" stroke-linejoin="round"/><circle cx="51.90" cy="214.45" r="2.15" fill="#3a4556" /><circle cx="51.90" cy="214.45" r="1.00" fill="#ececec" /><rect x="65.30" y="209.45" width="8.00" height="7.50" fill="#d4d4d4" /><rect x="65.30" y="209.45" width="8.00" height="7.50" fill="none" stroke="#f0f0f0" stroke-width="0.5"/><line x1="63.00" y1="219.25" x2="69.30" y2="212.95" stroke="#e89a5a" stroke-width="1.20" /><path d="M46.60 230.00 Q51.90 223.70 57.20 230.00 Q51.90 236.30 46.60 230.00 Z" fill="#ececec" stroke="#ececec" stroke-width="0.5" stroke-linejoin="round"/><circle cx="51.90" cy="230.00" r="2.15" fill="#3a4556" /><circle cx="51.90" cy="230.00" r="1.00" fill="#ececec" /><rect x="65.30" y="225.00" width="8.00" height="7.50" fill="#d4d4d4" /><rect x="65.30" y="225.00" width="8.00" height="7.50" fill="none" stroke="#f0f0f0" stroke-width="0.5"/><line x1="63.00" y1="234.80" x2="69.30" y2="228.50" stroke="#e89a5a" stroke-width="1.20" /><path d="M46.60 245.55 Q51.90 239.25 57.20 245.55 Q51.90 251.85 46.60 245.55 Z" fill="#ececec" stroke="#ececec" stroke-width="0.5" stroke-linejoin="round"/><circle cx="51.90" cy="245.55" r="2.15" fill="#3a4556" /><circle cx="51.90" cy="245.55" r="1.00" fill="#ececec" /><path d="M65.20 240.15 h8 v7.4" fill="none" stroke="#f0f0f0" stroke-width="0.9"/><path d="M65.20 241.95 h5.6 v5.2" fill="none" stroke="#b8bcc2" stroke-width="0.6"/><rect x="62.60" y="243.35" width="7.80" height="6.80" fill="#f7b77a" /><rect x="65.20" y="243.35" width="5.20" height="4.20" fill="#f2a25e" /><path d="M46.60 261.10 Q51.90 254.80 57.20 261.10 Q51.90 267.40 46.60 261.10 Z" fill="#ececec" stroke="#ececec" stroke-width="0.5" stroke-linejoin="round"/><circle cx="51.90" cy="261.10" r="2.15" fill="#3a4556" /><circle cx="51.90" cy="261.10" r="1.00" fill="#ececec" /><path d="M65.20 255.70 h8 v7.4" fill="none" stroke="#f0f0f0" stroke-width="0.9"/><path d="M65.20 257.50 h5.6 v5.2" fill="none" stroke="#b8bcc2" stroke-width="0.6"/><rect x="62.60" y="258.90" width="7.80" height="6.80" fill="#f7b77a" /><rect x="65.20" y="258.90" width="5.20" height="4.20" fill="#f2a25e" /><path d="M46.60 276.65 Q51.90 270.35 57.20 276.65 Q51.90 282.95 46.60 276.65 Z" fill="#ececec" stroke="#ececec" stroke-width="0.5" stroke-linejoin="round"/><circle cx="51.90" cy="276.65" r="2.15" fill="#3a4556" /><circle cx="51.90" cy="276.65" r="1.00" fill="#ececec" /><path d="M65.20 271.25 h8 v7.4" fill="none" stroke="#f0f0f0" stroke-width="0.9"/><path d="M65.20 273.05 h5.6 v5.2" fill="none" stroke="#b8bcc2" stroke-width="0.6"/><rect x="62.60" y="274.45" width="7.80" height="6.80" fill="#f7b77a" /><rect x="65.20" y="274.45" width="5.20" height="4.20" fill="#f2a25e" /><path d="M20.90 290.00 l2.7 2.1 l2.7 -2.1 M20.90 292.50 l2.7 2.1 l2.7 -2.1" fill="none" stroke="#6e6e6e" stroke-width="1.3"/><path d="M34.70 292.20 Q40.00 285.90 45.30 292.20 Q40.00 298.50 34.70 292.20 Z" fill="#ececec" stroke="#ececec" stroke-width="0.5" stroke-linejoin="round"/><circle cx="40.00" cy="292.20" r="2.15" fill="#3a4556" /><circle cx="40.00" cy="292.20" r="1.00" fill="#ececec" /><path d="M51.00 287.70 h4 l1 1.3 h5.7 v7.6 h-10.7 Z" fill="#d9d9d9" /><path d="M51.00 287.70 h4 l0.8 1 h-4.8 Z" fill="#f2f2f2" /><path d="M46.50 307.75 Q51.60 301.85 56.70 307.75 Q51.60 313.65 46.50 307.75 Z" fill="none" stroke="#8f97a3" stroke-width="0.9" stroke-linejoin="round"/><circle cx="51.60" cy="307.75" r="1.70" fill="none" stroke="#8f97a3" stroke-width="0.8"/><line x1="47.80" y1="304.35" x2="55.40" y2="311.15" stroke="#8f97a3" stroke-width="0.90" /><rect x="63.30" y="304.75" width="9.60" height="6.00" fill="#6ec6f8" /><ellipse cx="68.10" cy="310.75" rx="4.8" ry="1.6" fill="#6ec6f8"/><ellipse cx="68.10" cy="304.75" rx="4.8" ry="1.6" fill="#a6defc"/><path d="M46.50 323.30 Q51.60 317.40 56.70 323.30 Q51.60 329.20 46.50 323.30 Z" fill="none" stroke="#8f97a3" stroke-width="0.9" stroke-linejoin="round"/><circle cx="51.60" cy="323.30" r="1.70" fill="none" stroke="#8f97a3" stroke-width="0.8"/><line x1="47.80" y1="319.90" x2="55.40" y2="326.70" stroke="#8f97a3" stroke-width="0.90" /><rect x="63.30" y="320.30" width="9.60" height="6.00" fill="#6ec6f8" /><ellipse cx="68.10" cy="326.30" rx="4.8" ry="1.6" fill="#6ec6f8"/><ellipse cx="68.10" cy="320.30" rx="4.8" ry="1.6" fill="#a6defc"/><path d="M46.50 338.85 Q51.60 332.95 56.70 338.85 Q51.60 344.75 46.50 338.85 Z" fill="none" stroke="#8f97a3" stroke-width="0.9" stroke-linejoin="round"/><circle cx="51.60" cy="338.85" r="1.70" fill="none" stroke="#8f97a3" stroke-width="0.8"/><line x1="47.80" y1="335.45" x2="55.40" y2="342.25" stroke="#8f97a3" stroke-width="0.90" /><rect x="63.30" y="335.85" width="9.60" height="6.00" fill="#6ec6f8" /><ellipse cx="68.10" cy="341.85" rx="4.8" ry="1.6" fill="#6ec6f8"/><ellipse cx="68.10" cy="335.85" rx="4.8" ry="1.6" fill="#a6defc"/><path d="M21.80 351.50 l2.2 2.9 l-2.2 2.9 M23.50 351.50 l2.2 2.9 l-2.2 2.9" fill="none" stroke="#6e6e6e" stroke-width="1.15"/><path d="M34.70 354.40 Q40.00 348.10 45.30 354.40 Q40.00 360.70 34.70 354.40 Z" fill="#ececec" stroke="#ececec" stroke-width="0.5" stroke-linejoin="round"/><circle cx="40.00" cy="354.40" r="2.15" fill="#3a4556" /><circle cx="40.00" cy="354.40" r="1.00" fill="#ececec" /><path d="M51.00 349.90 h4 l1 1.3 h5.7 v7.6 h-10.7 Z" fill="#d9d9d9" /><path d="M51.00 349.90 h4 l0.8 1 h-4.8 Z" fill="#f2f2f2" /><rect x="178.30" y="655.60" width="4.60" height="1.10" fill="#cfd3da" /><rect x="180.05" y="653.85" width="1.10" height="4.60" fill="#cfd3da" /><rect x="3.40" y="681.20" width="1.20" height="7.20" fill="#b4b9c2" /><polygon points="9.60,681.20 9.60,688.40 4.80,684.80" fill="#b4b9c2" /><polygon points="25.40,681.40 25.40,688.20 19.40,684.80" fill="#8e95a0" /><rect x="25.60" y="681.40" width="1.40" height="6.80" fill="#8e95a0" /><polygon points="35.60,680.20 35.60,689.40 43.40,684.80" fill="#b4b9c2" /><polygon points="52.60,681.40 52.60,688.20 58.60,684.80" fill="#8e95a0" /><rect x="51.00" y="681.40" width="1.40" height="6.80" fill="#8e95a0" /><polygon points="68.40,681.20 68.40,688.40 73.20,684.80" fill="#b4b9c2" /><rect x="73.40" y="681.20" width="1.20" height="7.20" fill="#b4b9c2" /><line x1="94.20" y1="694.80" x2="545.36" y2="694.80" stroke="#5f6c82" stroke-width="1.10" /><line x1="94.70" y1="691.40" x2="94.70" y2="694.80" stroke="#5f6c82" stroke-width="1.00" /><g transform="translate(94.70 683.90) scale(0.9) translate(-94.70 -683.90)"><rect x="89.90" y="679.10" width="9.40" height="9.40" fill="none" stroke="#aeb4be" stroke-width="0.8" stroke-dasharray="1.2 0.6"/><rect x="89.10" y="678.30" width="1.80" height="1.80" fill="#4db4f2" /><rect x="98.70" y="678.30" width="1.80" height="1.80" fill="#4db4f2" /><rect x="89.10" y="687.90" width="1.80" height="1.80" fill="#4db4f2" /><line x1="95.70" y1="688.90" x2="99.30" y2="685.30" stroke="#f3c23e" stroke-width="2.00" /><line x1="99.30" y1="685.30" x2="100.50" y2="684.10" stroke="#e5484a" stroke-width="2.00" /><polygon points="94.10,690.50 94.90,688.10 96.50,689.70" fill="#e8d2a8" /></g><line x1="110.24" y1="691.40" x2="110.24" y2="694.80" stroke="#5f6c82" stroke-width="1.00" /><g transform="translate(110.24 683.90) scale(0.9) translate(-110.24 -683.90)"><polygon points="104.44,680.30 106.04,678.50 113.44,678.50 112.64,680.30" fill="#a6defc" /><rect x="104.44" y="680.30" width="8.20" height="7.60" fill="#6cc3f6" /><rect x="104.44" y="687.90" width="8.20" height="1.60" fill="#f0f0f0" /><rect x="113.74" y="678.70" width="2.00" height="9.00" fill="#aeb2b8" /></g><line x1="125.78" y1="691.40" x2="125.78" y2="694.80" stroke="#5f6c82" stroke-width="1.00" /><g transform="translate(125.78 683.90) scale(0.9) translate(-125.78 -683.90)"><rect x="120.98" y="679.10" width="9.40" height="9.40" fill="none" stroke="#aeb4be" stroke-width="0.8" stroke-dasharray="1.2 0.6"/><rect x="120.18" y="678.30" width="1.80" height="1.80" fill="#4db4f2" /><rect x="129.78" y="678.30" width="1.80" height="1.80" fill="#4db4f2" /><rect x="120.18" y="687.90" width="1.80" height="1.80" fill="#4db4f2" /><line x1="126.78" y1="688.90" x2="130.38" y2="685.30" stroke="#f3c23e" stroke-width="2.00" /><line x1="130.38" y1="685.30" x2="131.58" y2="684.10" stroke="#e5484a" stroke-width="2.00" /><polygon points="125.18,690.50 125.98,688.10 127.58,689.70" fill="#e8d2a8" /></g><line x1="141.32" y1="691.40" x2="141.32" y2="694.80" stroke="#5f6c82" stroke-width="1.00" /><g transform="translate(141.32 683.90) scale(0.9) translate(-141.32 -683.90)"><polygon points="135.52,680.30 137.12,678.50 144.52,678.50 143.72,680.30" fill="#a6defc" /><rect x="135.52" y="680.30" width="8.20" height="7.60" fill="#6cc3f6" /><rect x="135.52" y="687.90" width="8.20" height="1.60" fill="#f0f0f0" /><rect x="144.82" y="678.70" width="2.00" height="9.00" fill="#aeb2b8" /></g><line x1="156.86" y1="691.40" x2="156.86" y2="694.80" stroke="#5f6c82" stroke-width="1.00" /><g transform="translate(156.86 683.90) scale(0.9) translate(-156.86 -683.90)"><path d="M156.46 677.90 h6.4 v6.6 l-2.4 2 v3.4 h-9 v-7 l2.4 -1.9 h2.2 v-1.3 Z" fill="#62bdf4" /><path d="M156.06 679.70 l2.3 -1.8 h4.1 l-2.3 1.8 Z" fill="#8ad3fb" /><path d="M160.46 679.80 l2.4 -1.9 v6.6 l-2.4 2 Z" fill="#3d9fe2" /></g><line x1="172.40" y1="691.40" x2="172.40" y2="694.80" stroke="#5f6c82" stroke-width="1.00" /><g transform="translate(172.40 683.90) scale(0.9) translate(-172.40 -683.90)"><path d="M178.40 680.70 l-3 -2.6 h-3 l-6 6 v3.4 l3 2.6 h9 Z" fill="#d6d6d6" /><path d="M175.00 680.70 l-2.6 -2.6 l-6 6 l3 2.6 Z" fill="#62bdf4" /><path d="M169.40 686.70 l-3 -2.6 v3.4 l3 2.6 Z" fill="#b4b4b4" /></g><line x1="187.94" y1="691.40" x2="187.94" y2="694.80" stroke="#5f6c82" stroke-width="1.00" /><g transform="translate(187.94 683.90) scale(0.9) translate(-187.94 -683.90)"><path d="M181.94 680.70 l3 -2.6 h3.4 q5.6 0.6 5.6 6 v3.4 l-3 2.6 h-9 Z" fill="#d6d6d6" /><path d="M185.54 680.70 l2.8 -2.6 q5.8 0.6 5.8 6 l-3 2.6 q0 -5.4 -5.6 -6 Z" fill="#62bdf4" /><path d="M190.94 686.70 l3 -2.6 v3.4 l-3 2.6 Z" fill="#b4b4b4" /></g><line x1="203.48" y1="691.40" x2="203.48" y2="694.80" stroke="#5f6c82" stroke-width="1.00" /><g transform="translate(203.48 683.90) scale(0.9) translate(-203.48 -683.90)"><line x1="199.88" y1="683.90" x2="207.08" y2="683.90" stroke="#fff" stroke-width="1.00" /><line x1="203.48" y1="680.30" x2="203.48" y2="687.50" stroke="#fff" stroke-width="1.00" /><polygon points="208.68,683.90 206.48,682.00 206.48,685.80" fill="#fff" /><polygon points="198.28,683.90 200.48,685.80 200.48,682.00" fill="#fff" /><polygon points="203.48,689.10 201.58,686.90 205.38,686.90" fill="#fff" /><polygon points="203.48,678.70 205.38,680.90 201.58,680.90" fill="#fff" /></g><line x1="219.02" y1="691.40" x2="219.02" y2="694.80" stroke="#5f6c82" stroke-width="1.00" /><g transform="translate(219.02 683.90) scale(0.9) translate(-219.02 -683.90)"><rect x="214.22" y="679.10" width="9.40" height="9.40" fill="none" stroke="#aeb4be" stroke-width="0.8" stroke-dasharray="1.2 0.6"/><rect x="213.42" y="678.30" width="1.80" height="1.80" fill="#4db4f2" /><rect x="223.02" y="678.30" width="1.80" height="1.80" fill="#4db4f2" /><rect x="213.42" y="687.90" width="1.80" height="1.80" fill="#4db4f2" /><line x1="220.02" y1="688.90" x2="223.62" y2="685.30" stroke="#f3c23e" stroke-width="2.00" /><line x1="223.62" y1="685.30" x2="224.82" y2="684.10" stroke="#e5484a" stroke-width="2.00" /><polygon points="218.42,690.50 219.22,688.10 220.82,689.70" fill="#e8d2a8" /></g><line x1="234.56" y1="691.40" x2="234.56" y2="694.80" stroke="#5f6c82" stroke-width="1.00" /><g transform="translate(234.56 683.90) scale(0.9) translate(-234.56 -683.90)"><polygon points="228.76,680.30 230.36,678.50 237.76,678.50 236.96,680.30" fill="#a6defc" /><rect x="228.76" y="680.30" width="8.20" height="7.60" fill="#6cc3f6" /><rect x="228.76" y="687.90" width="8.20" height="1.60" fill="#f0f0f0" /><rect x="238.06" y="678.70" width="2.00" height="9.00" fill="#aeb2b8" /></g><line x1="250.10" y1="691.40" x2="250.10" y2="694.80" stroke="#5f6c82" stroke-width="1.00" /><g transform="translate(250.10 683.90) scale(0.9) translate(-250.10 -683.90)"><path d="M244.10 680.70 l3 -2.6 h3.4 q5.6 0.6 5.6 6 v3.4 l-3 2.6 h-9 Z" fill="#d6d6d6" /><path d="M247.70 680.70 l2.8 -2.6 q5.8 0.6 5.8 6 l-3 2.6 q0 -5.4 -5.6 -6 Z" fill="#62bdf4" /><path d="M253.10 686.70 l3 -2.6 v3.4 l-3 2.6 Z" fill="#b4b4b4" /></g><line x1="265.64" y1="691.40" x2="265.64" y2="694.80" stroke="#5f6c82" stroke-width="1.00" /><g transform="translate(265.64 683.90) scale(0.9) translate(-265.64 -683.90)"><rect x="260.84" y="679.10" width="9.40" height="9.40" fill="none" stroke="#aeb4be" stroke-width="0.8" stroke-dasharray="1.2 0.6"/><rect x="260.04" y="678.30" width="1.80" height="1.80" fill="#4db4f2" /><rect x="269.64" y="678.30" width="1.80" height="1.80" fill="#4db4f2" /><rect x="260.04" y="687.90" width="1.80" height="1.80" fill="#4db4f2" /><line x1="266.64" y1="688.90" x2="270.24" y2="685.30" stroke="#f3c23e" stroke-width="2.00" /><line x1="270.24" y1="685.30" x2="271.44" y2="684.10" stroke="#e5484a" stroke-width="2.00" /><polygon points="265.04,690.50 265.84,688.10 267.44,689.70" fill="#e8d2a8" /></g><line x1="281.18" y1="691.40" x2="281.18" y2="694.80" stroke="#5f6c82" stroke-width="1.00" /><g transform="translate(281.18 683.90) scale(0.9) translate(-281.18 -683.90)"><polygon points="275.38,680.30 276.98,678.50 284.38,678.50 283.58,680.30" fill="#a6defc" /><rect x="275.38" y="680.30" width="8.20" height="7.60" fill="#6cc3f6" /><rect x="275.38" y="687.90" width="8.20" height="1.60" fill="#f0f0f0" /><rect x="284.68" y="678.70" width="2.00" height="9.00" fill="#aeb2b8" /></g><line x1="296.72" y1="691.40" x2="296.72" y2="694.80" stroke="#5f6c82" stroke-width="1.00" /><g transform="translate(296.72 683.90) scale(0.9) translate(-296.72 -683.90)"><rect x="291.92" y="679.10" width="9.40" height="9.40" fill="none" stroke="#aeb4be" stroke-width="0.8" stroke-dasharray="1.2 0.6"/><rect x="291.12" y="678.30" width="1.80" height="1.80" fill="#4db4f2" /><rect x="300.72" y="678.30" width="1.80" height="1.80" fill="#4db4f2" /><rect x="291.12" y="687.90" width="1.80" height="1.80" fill="#4db4f2" /><line x1="297.72" y1="688.90" x2="301.32" y2="685.30" stroke="#f3c23e" stroke-width="2.00" /><line x1="301.32" y1="685.30" x2="302.52" y2="684.10" stroke="#e5484a" stroke-width="2.00" /><polygon points="296.12,690.50 296.92,688.10 298.52,689.70" fill="#e8d2a8" /></g><line x1="312.26" y1="691.40" x2="312.26" y2="694.80" stroke="#5f6c82" stroke-width="1.00" /><g transform="translate(312.26 683.90) scale(0.9) translate(-312.26 -683.90)"><polygon points="306.46,680.30 308.06,678.50 315.46,678.50 314.66,680.30" fill="#a6defc" /><rect x="306.46" y="680.30" width="8.20" height="7.60" fill="#6cc3f6" /><rect x="306.46" y="687.90" width="8.20" height="1.60" fill="#f0f0f0" /><rect x="315.76" y="678.70" width="2.00" height="9.00" fill="#aeb2b8" /></g><line x1="327.80" y1="691.40" x2="327.80" y2="694.80" stroke="#5f6c82" stroke-width="1.00" /><g transform="translate(327.80 683.90) scale(0.9) translate(-327.80 -683.90)"><rect x="323.20" y="678.90" width="4.4" height="5" rx="1" fill="#e8e8e8"/><rect x="328.20" y="684.10" width="4.4" height="5" rx="1" fill="#d6d6d6"/><path d="M325.20 684.30 v3 h2.6" fill="none" stroke="#3da8e8" stroke-width="0.9"/></g><line x1="343.34" y1="691.40" x2="343.34" y2="694.80" stroke="#5f6c82" stroke-width="1.00" /><g transform="translate(343.34 683.90) scale(0.9) translate(-343.34 -683.90)"><line x1="339.74" y1="683.90" x2="346.94" y2="683.90" stroke="#fff" stroke-width="1.00" /><line x1="343.34" y1="680.30" x2="343.34" y2="687.50" stroke="#fff" stroke-width="1.00" /><polygon points="348.54,683.90 346.34,682.00 346.34,685.80" fill="#fff" /><polygon points="338.14,683.90 340.34,685.80 340.34,682.00" fill="#fff" /><polygon points="343.34,689.10 341.44,686.90 345.24,686.90" fill="#fff" /><polygon points="343.34,678.70 345.24,680.90 341.44,680.90" fill="#fff" /></g><line x1="358.88" y1="691.40" x2="358.88" y2="694.80" stroke="#5f6c82" stroke-width="1.00" /><g transform="translate(358.88 683.90) scale(0.9) translate(-358.88 -683.90)"><path d="M358.48 677.90 h6.4 v6.6 l-2.4 2 v3.4 h-9 v-7 l2.4 -1.9 h2.2 v-1.3 Z" fill="#62bdf4" /><path d="M358.08 679.70 l2.3 -1.8 h4.1 l-2.3 1.8 Z" fill="#8ad3fb" /><path d="M362.48 679.80 l2.4 -1.9 v6.6 l-2.4 2 Z" fill="#3d9fe2" /></g><line x1="374.42" y1="691.40" x2="374.42" y2="694.80" stroke="#5f6c82" stroke-width="1.00" /><g transform="translate(374.42 683.90) scale(0.9) translate(-374.42 -683.90)"><rect x="369.62" y="679.10" width="9.40" height="9.40" fill="none" stroke="#aeb4be" stroke-width="0.8" stroke-dasharray="1.2 0.6"/><rect x="368.82" y="678.30" width="1.80" height="1.80" fill="#4db4f2" /><rect x="378.42" y="678.30" width="1.80" height="1.80" fill="#4db4f2" /><rect x="368.82" y="687.90" width="1.80" height="1.80" fill="#4db4f2" /><line x1="375.42" y1="688.90" x2="379.02" y2="685.30" stroke="#f3c23e" stroke-width="2.00" /><line x1="379.02" y1="685.30" x2="380.22" y2="684.10" stroke="#e5484a" stroke-width="2.00" /><polygon points="373.82,690.50 374.62,688.10 376.22,689.70" fill="#e8d2a8" /></g><line x1="389.96" y1="691.40" x2="389.96" y2="694.80" stroke="#5f6c82" stroke-width="1.00" /><g transform="translate(389.96 683.90) scale(0.9) translate(-389.96 -683.90)"><path d="M384.26 680.70 q5.6 -4.6 11.4 0" fill="none" stroke="#e3e3e3" stroke-width="0.8"/><path d="M383.96 683.50 q6 -5 12 0 v4.6 l-2.2 1.4 q-3.6 -2.6 -7.4 0.4 l-2.4 -1.6 Z" fill="#62bdf4" /><path d="M383.96 683.50 q6 -5 12 0 l-2.2 1.6 q-3.6 -2.6 -7.4 0.2 Z" fill="#8ad3fb" /><path d="M393.76 685.10 l2.2 -1.6 v4.6 l-2.2 1.4 Z" fill="#d6d6d6" /></g><line x1="405.50" y1="691.40" x2="405.50" y2="694.80" stroke="#5f6c82" stroke-width="1.00" /><g transform="translate(405.50 683.90) scale(0.9) translate(-405.50 -683.90)"><rect x="400.70" y="679.10" width="9.40" height="9.40" fill="none" stroke="#aeb4be" stroke-width="0.8" stroke-dasharray="1.2 0.6"/><rect x="399.90" y="678.30" width="1.80" height="1.80" fill="#4db4f2" /><rect x="409.50" y="678.30" width="1.80" height="1.80" fill="#4db4f2" /><rect x="399.90" y="687.90" width="1.80" height="1.80" fill="#4db4f2" /><line x1="406.50" y1="688.90" x2="410.10" y2="685.30" stroke="#f3c23e" stroke-width="2.00" /><line x1="410.10" y1="685.30" x2="411.30" y2="684.10" stroke="#e5484a" stroke-width="2.00" /><polygon points="404.90,690.50 405.70,688.10 407.30,689.70" fill="#e8d2a8" /></g><line x1="421.04" y1="691.40" x2="421.04" y2="694.80" stroke="#5f6c82" stroke-width="1.00" /><g transform="translate(421.04 683.90) scale(0.9) translate(-421.04 -683.90)"><path d="M415.04 680.70 l2.6 -2.4 h7 l2.4 2.4 v4.4 l-2.4 2 h-3 v-3.4 h-6.6 Z" fill="#62bdf4" /><path d="M415.04 680.70 l2.6 -2.4 h7 l-2.4 2.4 Z" fill="#8ad3fb" /><rect x="418.04" y="684.30" width="5.60" height="5.60" fill="#d6d6d6" stroke="#777" stroke-width="0.5"/></g><line x1="436.58" y1="691.40" x2="436.58" y2="694.80" stroke="#5f6c82" stroke-width="1.00" /><g transform="translate(436.58 683.90) scale(0.9) translate(-436.58 -683.90)"><polygon points="436.58,677.90 430.98,689.30 436.58,689.30" fill="#d6d6d6" /><polygon points="436.58,677.90 442.18,689.30 436.58,689.30" fill="#62bdf4" /><line x1="436.58" y1="677.90" x2="436.58" y2="689.30" stroke="#555" stroke-width="0.60" /></g><line x1="452.12" y1="691.40" x2="452.12" y2="694.80" stroke="#5f6c82" stroke-width="1.00" /><g transform="translate(452.12 683.90) scale(0.9) translate(-452.12 -683.90)"><line x1="449.52" y1="683.90" x2="453.12" y2="683.90" stroke="#b9b9b9" stroke-width="1.60" /><polygon points="446.32,683.90 449.72,681.20 449.72,686.60" fill="#c4c4c4" /><circle cx="454.92" cy="683.90" r="2.80" fill="#80aade" stroke="#5f8fcb" stroke-width="0.5"/></g><line x1="467.66" y1="691.40" x2="467.66" y2="694.80" stroke="#5f6c82" stroke-width="1.00" /><g transform="translate(467.66 683.90) scale(0.9) translate(-467.66 -683.90)"><path d="M467.26 677.90 h6.4 v6.6 l-2.4 2 v3.4 h-9 v-7 l2.4 -1.9 h2.2 v-1.3 Z" fill="#62bdf4" /><path d="M466.86 679.70 l2.3 -1.8 h4.1 l-2.3 1.8 Z" fill="#8ad3fb" /><path d="M471.26 679.80 l2.4 -1.9 v6.6 l-2.4 2 Z" fill="#3d9fe2" /></g><line x1="483.20" y1="691.40" x2="483.20" y2="694.80" stroke="#5f6c82" stroke-width="1.00" /><g transform="translate(483.20 683.90) scale(0.9) translate(-483.20 -683.90)"><line x1="479.60" y1="683.90" x2="486.80" y2="683.90" stroke="#fff" stroke-width="1.00" /><line x1="483.20" y1="680.30" x2="483.20" y2="687.50" stroke="#fff" stroke-width="1.00" /><polygon points="488.40,683.90 486.20,682.00 486.20,685.80" fill="#fff" /><polygon points="478.00,683.90 480.20,685.80 480.20,682.00" fill="#fff" /><polygon points="483.20,689.10 481.30,686.90 485.10,686.90" fill="#fff" /><polygon points="483.20,678.70 485.10,680.90 481.30,680.90" fill="#fff" /></g><line x1="498.74" y1="691.40" x2="498.74" y2="694.80" stroke="#5f6c82" stroke-width="1.00" /><g transform="translate(498.74 683.90) scale(0.9) translate(-498.74 -683.90)"><rect x="493.94" y="679.10" width="9.40" height="9.40" fill="none" stroke="#aeb4be" stroke-width="0.8" stroke-dasharray="1.2 0.6"/><rect x="493.14" y="678.30" width="1.80" height="1.80" fill="#4db4f2" /><rect x="502.74" y="678.30" width="1.80" height="1.80" fill="#4db4f2" /><rect x="493.14" y="687.90" width="1.80" height="1.80" fill="#4db4f2" /><line x1="499.74" y1="688.90" x2="503.34" y2="685.30" stroke="#f3c23e" stroke-width="2.00" /><line x1="503.34" y1="685.30" x2="504.54" y2="684.10" stroke="#e5484a" stroke-width="2.00" /><polygon points="498.14,690.50 498.94,688.10 500.54,689.70" fill="#e8d2a8" /></g><line x1="514.28" y1="691.40" x2="514.28" y2="694.80" stroke="#5f6c82" stroke-width="1.00" /><g transform="translate(514.28 683.90) scale(0.9) translate(-514.28 -683.90)"><path d="M508.58 680.70 q5.6 -4.6 11.4 0" fill="none" stroke="#e3e3e3" stroke-width="0.8"/><path d="M508.28 683.50 q6 -5 12 0 v4.6 l-2.2 1.4 q-3.6 -2.6 -7.4 0.4 l-2.4 -1.6 Z" fill="#62bdf4" /><path d="M508.28 683.50 q6 -5 12 0 l-2.2 1.6 q-3.6 -2.6 -7.4 0.2 Z" fill="#8ad3fb" /><path d="M518.08 685.10 l2.2 -1.6 v4.6 l-2.2 1.4 Z" fill="#d6d6d6" /></g><line x1="529.82" y1="691.40" x2="529.82" y2="694.80" stroke="#5f6c82" stroke-width="1.00" /><g transform="translate(529.82 683.90) scale(0.9) translate(-529.82 -683.90)"><rect x="525.02" y="679.10" width="9.40" height="9.40" fill="none" stroke="#aeb4be" stroke-width="0.8" stroke-dasharray="1.2 0.6"/><rect x="524.22" y="678.30" width="1.80" height="1.80" fill="#4db4f2" /><rect x="533.82" y="678.30" width="1.80" height="1.80" fill="#4db4f2" /><rect x="524.22" y="687.90" width="1.80" height="1.80" fill="#4db4f2" /><line x1="530.82" y1="688.90" x2="534.42" y2="685.30" stroke="#f3c23e" stroke-width="2.00" /><line x1="534.42" y1="685.30" x2="535.62" y2="684.10" stroke="#e5484a" stroke-width="2.00" /><polygon points="529.22,690.50 530.02,688.10 531.62,689.70" fill="#e8d2a8" /></g><line x1="545.36" y1="691.40" x2="545.36" y2="694.80" stroke="#5f6c82" stroke-width="1.00" /><g transform="translate(545.36 683.90) scale(0.9) translate(-545.36 -683.90)"><rect x="540.56" y="679.10" width="9.40" height="9.40" fill="none" stroke="#aeb4be" stroke-width="0.8" stroke-dasharray="1.2 0.6"/><rect x="539.76" y="678.30" width="1.80" height="1.80" fill="#4db4f2" /><rect x="549.36" y="678.30" width="1.80" height="1.80" fill="#4db4f2" /><rect x="539.76" y="687.90" width="1.80" height="1.80" fill="#4db4f2" /><line x1="546.36" y1="688.90" x2="549.96" y2="685.30" stroke="#f3c23e" stroke-width="2.00" /><line x1="549.96" y1="685.30" x2="551.16" y2="684.10" stroke="#e5484a" stroke-width="2.00" /><polygon points="544.76,690.50 545.56,688.10 547.16,689.70" fill="#e8d2a8" /></g><path d="M549.2 675.2 h6.8 v1.6 l-2.6 3.4 v14.6 h-1.6 v-14.6 l-2.6 -3.4 Z" fill="#e4e6ea" /><rect x="-1.2" y="-4.90" width="2.4" height="3" fill="#aab0bb" transform="translate(1010.20 685.40) rotate(0)"/><rect x="-1.2" y="-4.90" width="2.4" height="3" fill="#aab0bb" transform="translate(1010.20 685.40) rotate(60)"/><rect x="-1.2" y="-4.90" width="2.4" height="3" fill="#aab0bb" transform="translate(1010.20 685.40) rotate(120)"/><rect x="-1.2" y="-4.90" width="2.4" height="3" fill="#aab0bb" transform="translate(1010.20 685.40) rotate(180)"/><rect x="-1.2" y="-4.90" width="2.4" height="3" fill="#aab0bb" transform="translate(1010.20 685.40) rotate(240)"/><rect x="-1.2" y="-4.90" width="2.4" height="3" fill="#aab0bb" transform="translate(1010.20 685.40) rotate(300)"/><circle cx="1010.20" cy="685.40" r="3.50" fill="#aab0bb" /><circle cx="1010.20" cy="685.40" r="1.57" fill="#3a4556" /><ellipse cx="439" cy="655.60" rx="4.6" ry="2" fill="none" stroke="#dfe2e8" stroke-width="0.9"/><line x1="439.00" y1="650.40" x2="439.00" y2="660.20" stroke="#3da8e8" stroke-width="1.00" /><polygon points="448.30,654.25 451.70,654.25 450.00,656.55" fill="#9aa2ae" /><rect x="456.60" y="652.40" width="10.40" height="7.40" fill="#e8e8e8" /><rect x="458.40" y="654.40" width="6.80" height="3.40" fill="#3da8e8" /><rect x="459.00" y="650.80" width="3.00" height="1.60" fill="#e8e8e8" /><path d="M474.6 656.80 l-1.2 -3.6 l1 -0.5 l1.3 2.3 l-0.5 -5.3 l1.2 -0.2 l0.8 4.3 l0.1 -5.2 l1.2 0 l0.3 5.2 l0.9 -4.5 l1.2 0.2 l-0.5 5.2 l1.5 -2.6 l1 0.6 l-2 5 q-0.6 2.6 -2.4 3.4 h-3 q-1.6 -1 -1.9 -4.3 Z" fill="#e8e8e8" /><circle cx="493.60" cy="654.60" r="2.90" fill="none" stroke="#dfe2e8" stroke-width="1"/><line x1="495.80" y1="656.80" x2="498.60" y2="659.60" stroke="#e0a04a" stroke-width="1.30" /><rect x="497.40" y="650.40" width="3.40" height="0.90" fill="#dfe2e8" /><rect x="498.65" y="649.20" width="0.90" height="3.30" fill="#dfe2e8" /><rect x="497.40" y="652.80" width="3.40" height="0.90" fill="#dfe2e8" /><rect x="506.20" y="649.80" width="10.60" height="10.60" fill="none" stroke="#c8ccd3" stroke-width="0.7" stroke-dasharray="1.4 1"/><circle cx="511.20" cy="654.80" r="3.90" fill="none" stroke="#dfe2e8" stroke-width="1"/><line x1="514.00" y1="657.80" x2="516.60" y2="660.20" stroke="#e0a04a" stroke-width="1.20" /><polygon points="521.10,654.25 524.50,654.25 522.80,656.55" fill="#9aa2ae" /><rect x="528.60" y="651.00" width="10.20" height="7.20" fill="#c8ccd3" /><rect x="529.80" y="652.20" width="7.80" height="4.80" fill="#8a919c" /><rect x="531.60" y="658.20" width="4.20" height="1.20" fill="#c8ccd3" /><rect x="530.40" y="659.40" width="6.60" height="0.90" fill="#c8ccd3" /><polygon points="541.00,654.25 544.40,654.25 542.70,656.55" fill="#9aa2ae" /><line x1="548.80" y1="650.40" x2="548.80" y2="659.20" stroke="#dfe2e8" stroke-width="0.80" /><line x1="548.80" y1="650.40" x2="557.50" y2="650.40" stroke="#dfe2e8" stroke-width="0.80" /><line x1="551.70" y1="650.40" x2="551.70" y2="659.20" stroke="#dfe2e8" stroke-width="0.80" /><line x1="548.80" y1="653.33" x2="557.50" y2="653.33" stroke="#dfe2e8" stroke-width="0.80" /><line x1="554.60" y1="650.40" x2="554.60" y2="659.20" stroke="#dfe2e8" stroke-width="0.80" /><line x1="548.80" y1="656.26" x2="557.50" y2="656.26" stroke="#dfe2e8" stroke-width="0.80" /><line x1="557.50" y1="650.40" x2="557.50" y2="659.20" stroke="#dfe2e8" stroke-width="0.80" /><line x1="548.80" y1="659.19" x2="557.50" y2="659.19" stroke="#dfe2e8" stroke-width="0.80" /><polygon points="561.00,654.25 564.40,654.25 562.70,656.55" fill="#9aa2ae" /><rect x="568.60" y="650.80" width="4.80" height="3.80" fill="#cfd3d9" /><rect x="568.60" y="655.40" width="4.80" height="3.80" fill="#cfd3d9" /><rect x="574.10" y="650.80" width="4.80" height="3.80" fill="#cfd3d9" /><rect x="574.10" y="655.40" width="4.80" height="3.80" fill="#cfd3d9" /><polygon points="581.40,654.25 584.80,654.25 583.10,656.55" fill="#9aa2ae" /><defs><radialGradient id="vsh"><stop offset="0" stop-color="#000" stop-opacity="0.22"/><stop offset="1" stop-color="#000" stop-opacity="0"/></radialGradient></defs><ellipse cx="985" cy="153" rx="27" ry="13" fill="url(#vsh)"/><polygon points="984.20,110.20 1005.40,122.30 980.30,133.00 960.30,120.10" fill="#f1f1f1" /><polygon points="960.30,120.10 980.30,133.00 980.90,159.50 962.00,144.60" fill="#e9e9e9" /><polygon points="980.30,133.00 1005.40,122.30 1004.10,145.90 980.90,159.50" fill="#dcdcdc" /><path d="M960.3 120.1 L980.3 133 L1005.4 122.3 M980.3 133 L980.9 159.5" fill="none" stroke="#f8f8f8" stroke-width="0.8"/><line x1="958.60" y1="115.80" x2="962.00" y2="144.60" stroke="#6a6af0" stroke-width="1.10" /><line x1="962.00" y1="144.60" x2="984.20" y2="164.80" stroke="#f07a7a" stroke-width="1.10" /><text x="955.2" y="115" font-family="Liberation Sans, sans-serif" font-size="10.3" fill="#6464f0">Z</text><text x="983.6" y="171.2" font-family="Liberation Sans, sans-serif" font-size="9.4" fill="#f06464">X</text><text font-family="Liberation Sans, sans-serif" font-size="13" fill="#747474" transform="matrix(0.84,0.5,-0.8,0.33,979.6,122.9)" text-anchor="middle">上</text><text font-family="Liberation Sans, sans-serif" font-size="13" fill="#747474" transform="matrix(0.8,0.52,0,1,970.4,142.2)" text-anchor="middle">前</text><text font-family="Liberation Sans, sans-serif" font-size="13" fill="#747474" transform="matrix(0.9,-0.4,0,1,992.4,145.2)" text-anchor="middle">右</text><path d="M686.8 273.2 L686.8 282.6 L689 280.6 L690.5 283.8 L691.8 283.2 L690.4 280 L693.2 279.8 Z" fill="#fff" stroke="#222" stroke-width="0.35"/><line x1="742.20" y1="276.40" x2="745.60" y2="279.80" stroke="#aab1bc" stroke-width="0.80" /><line x1="745.60" y1="276.40" x2="742.20" y2="279.80" stroke="#aab1bc" stroke-width="0.80" /><line x1="684.30" y1="294.20" x2="684.30" y2="302.00" stroke="#3dc0f5" stroke-width="1.20" /><line x1="693.60" y1="294.20" x2="693.60" y2="302.00" stroke="#3dc0f5" stroke-width="1.20" /><line x1="685.60" y1="298.10" x2="692.40" y2="298.10" stroke="#e8e8e8" stroke-width="0.80" /><polygon points="685.20,298.10 687.00,297.00 687.00,299.20" fill="#e8e8e8" /><polygon points="692.80,298.10 691.00,297.00 691.00,299.20" fill="#e8e8e8" /><polygon points="773.00,296.70 776.20,296.70 774.60,298.90" fill="#c2c7cf" /><circle cx="652.90" cy="341.30" r="4.40" fill="#8fa3bf" /><rect x="652.30" y="340.40" width="1.20" height="3.20" fill="#3a4556" /><circle cx="652.90" cy="338.90" r="0.75" fill="#3a4556" /><circle cx="653.60" cy="378.60" r="0.85" fill="#8b8d6c" /><circle cx="653.60" cy="382.10" r="0.85" fill="#8b8d6c" /><circle cx="653.60" cy="385.60" r="0.85" fill="#8b8d6c" /><line x1="587.30" y1="376.50" x2="587.30" y2="388.50" stroke="#465163" stroke-width="0.70" /><line x1="590.30" y1="376.50" x2="590.30" y2="388.50" stroke="#465163" stroke-width="0.70" /><path d="M1018.6 0 H1024 V5.6 Q1023.6 0.6 1018.6 0 Z" fill="#2c2526" /><path d="M1018.2 0.2 Q1023.4 0.8 1023.6 6" fill="none" stroke="#6c6869" stroke-width="0.7"/><line x1="1023.60" y1="6.00" x2="1023.60" y2="17.00" stroke="#625e5f" stroke-width="0.80" /><path d="M1024 692.4 V698 H1018.4 Q1023.6 697.6 1024 692.4 Z" fill="#20242b" /></svg>
</div>
</body></html>
